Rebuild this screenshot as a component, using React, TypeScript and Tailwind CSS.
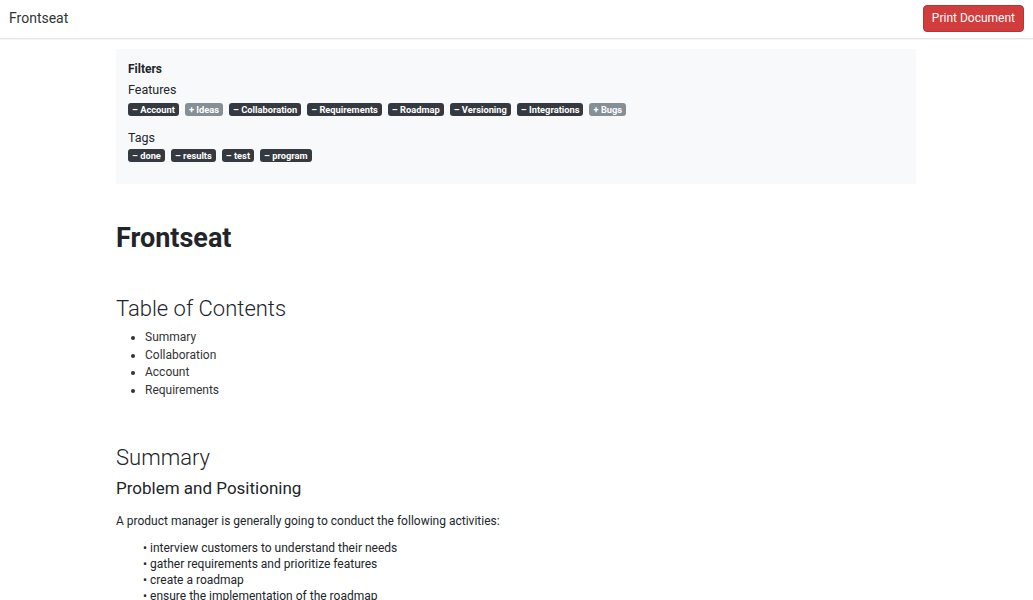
import React from "react";

const features = [
  { label: "Account", on: true },
  { label: "Ideas", on: false },
  { label: "Collaboration", on: true },
  { label: "Requirements", on: true },
  { label: "Roadmap", on: true },
  { label: "Versioning", on: true },
  { label: "Integrations", on: true },
  { label: "Bugs", on: false },
];

const tags = ["done", "results", "test", "program"];

const activities = [
  "interview customers to understand their needs",
  "gather requirements and prioritize features",
  "create a roadmap",
  "ensure the implementation of the roadmap",
];

function Badge({ label, on }: { label: string; on: boolean }) {
  return (
    <span
      className={`inline-flex items-center h-[13px] px-[4px] rounded-[3px] text-[9.3px] font-bold leading-none text-white ${
        on ? "bg-[#343a40]" : "bg-[#868e96]"
      }`}
    >
      {on ? "– " : "+ "}
      {label}
    </span>
  );
}

export default function App() {
  return (
    <div className="min-h-screen bg-white text-[#212529] font-['Roboto','Liberation_Sans',sans-serif]">
      {/* Navbar */}
      <nav className="h-[39px] flex items-center justify-between pl-[9px] pr-[9px] border-b border-[#e5e5e5] shadow-[0_1px_1px_rgba(0,0,0,0.04)]">
        <span className="text-[14px] text-[#333] -mt-[2px]">Frontseat</span>
        <button className="h-[27px] px-[8px] rounded-[4px] bg-[#d13c3c] border border-[#b83333] text-white text-[12px] -mt-[2px]">
          Print Document
        </button>
      </nav>

      <main className="w-[800px] ml-[116px] pt-[10px]">
        {/* Filters */}
        <section className="bg-[#f8f9fa] h-[135px] px-[12px] pt-[12px]">
          <h4 className="text-[12px] font-bold leading-[16px]">Filters</h4>
          <div className="mt-[5px] text-[12.5px] leading-[16px]">Features</div>
          <div className="mt-[5px] flex gap-[6px]">
            {features.map((f) => (
              <Badge key={f.label} label={f.label} on={f.on} />
            ))}
          </div>
          <div className="mt-[14px] text-[12.5px] leading-[16px]">Tags</div>
          <div className="mt-[3px] flex gap-[6px]">
            {tags.map((t) => (
              <Badge key={t} label={t} on />
            ))}
          </div>
        </section>

        <h1 className="mt-[38px] text-[27px] font-bold leading-[32px]">Frontseat</h1>

        <h2 className="mt-[41px] text-[22px] font-light leading-[28px]">Table of Contents</h2>
        <ul className="mt-[6px] list-disc pl-[29px] text-[12px] leading-[17.5px] text-[#333]">
          <li>Summary</li>
          <li>Collaboration</li>
          <li>Account</li>
          <li>Requirements</li>
        </ul>

        <h2 className="mt-[45px] text-[22px] font-light leading-[28px]">Summary</h2>
        <h3 className="mt-[5px] text-[17px] leading-[22px]">Problem and Positioning</h3>
        <p className="mt-[14px] text-[12px] leading-[16px]">
          A product manager is generally going to conduct the following activities:
        </p>
        <ul className="mt-[11px] pl-[27px] text-[12px] leading-[16px]">
          {activities.map((a) => (
            <li key={a}>• {a}</li>
          ))}
        </ul>
      </main>
    </div>
  );
}
